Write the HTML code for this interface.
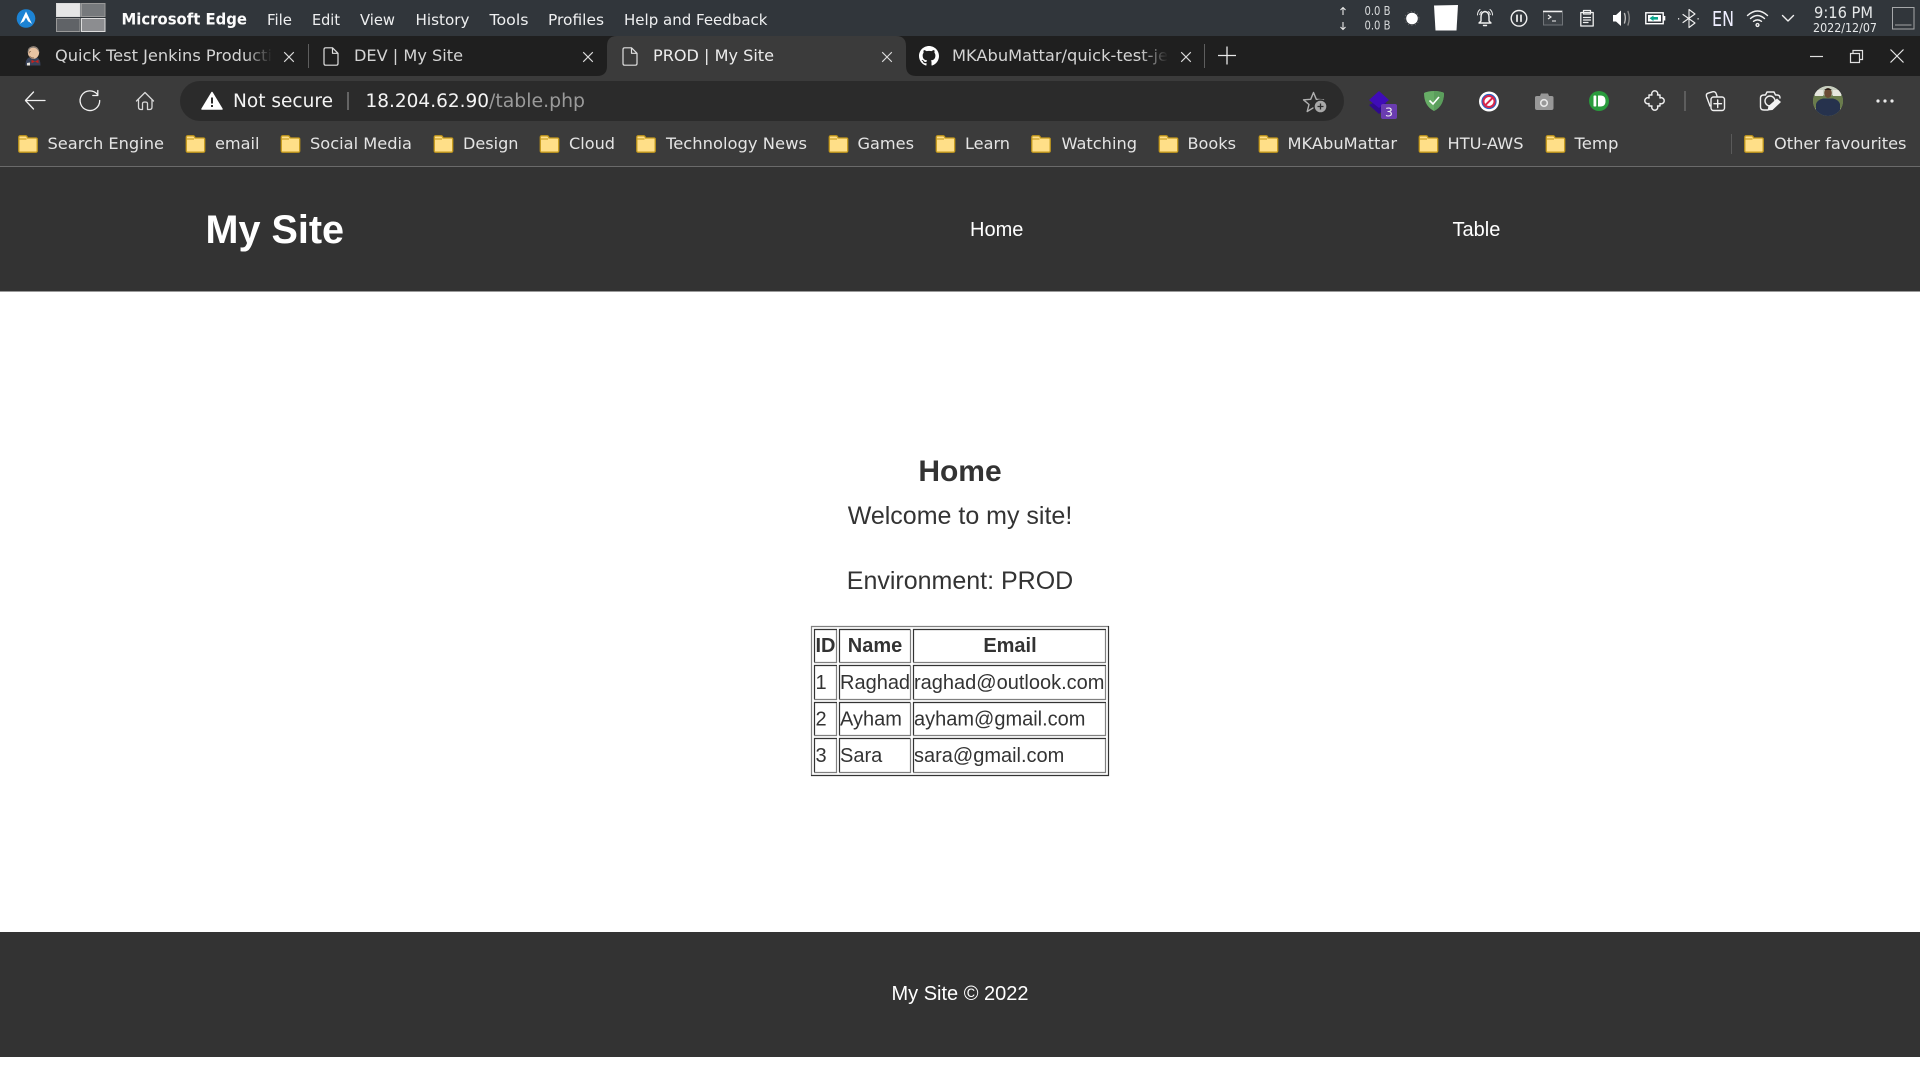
<!DOCTYPE html>
<html><head><meta charset="utf-8"><title>PROD | My Site</title>
<style>
html,body{margin:0;padding:0;background:#fff;width:1920px;height:1080px;overflow:hidden}
svg{display:block}
.c{font-family:"DejaVu Sans","Liberation Sans",sans-serif}
.p{font-family:"Liberation Sans",Arial,sans-serif}
.m{font-size:15.5px;fill:#eff0f1}
.t{font-size:16px}
.b{font-size:16px;fill:#e4e4e4}
.s{fill:none;stroke:#f0f0f0;stroke-width:1.4;stroke-linecap:round;stroke-linejoin:round}
</style></head><body>
<svg xmlns="http://www.w3.org/2000/svg" width="1920" height="1080" viewBox="0 0 1920 1080">
<defs>
<symbol id="f" viewBox="0 0 20 18" width="20" height="18" overflow="visible"><path d="M.8 2.2Q.8.8 2.2.8H7.5Q9 .8 9.5 3H18Q19.2 3 19.2 4.2V15.8Q19.2 17.2 18 17.2H2Q.8 17.2.8 15.8Z" fill="#ffdf88" stroke="#c59a1c" stroke-width="1.3"/><path d="M.8 4H8.5" stroke="#c59a1c" stroke-width="1.1"/></symbol>
<symbol id="d" viewBox="0 0 16 19" width="16" height="19" overflow="visible"><path d="M1 2.5Q1 .8 2.7 .8H9.5L15 6.3V16.5Q15 18.2 13.3 18.2H2.7Q1 18.2 1 16.5ZM9.5 .8V6.3H15" fill="none" stroke="#e0e0e0" stroke-width="1.2" stroke-linejoin="round"/></symbol>
<symbol id="x" viewBox="0 0 12 12" width="12" height="12" overflow="visible"><path d="M1.2 1.2L10.8 10.8M10.8 1.2L1.2 10.8" stroke="#dcdcdc" stroke-width="1.1" fill="none"/></symbol>
<linearGradient id="g1" gradientUnits="userSpaceOnUse" x1="245" x2="272" y1="0" y2="0"><stop offset="0" stop-color="#d4d4d4"/><stop offset="1" stop-color="#d4d4d4" stop-opacity="0"/></linearGradient>
<linearGradient id="g2" gradientUnits="userSpaceOnUse" x1="1140" x2="1168" y1="0" y2="0"><stop offset="0" stop-color="#d4d4d4"/><stop offset="1" stop-color="#d4d4d4" stop-opacity="0"/></linearGradient>
<clipPath id="av"><circle cx="1828" cy="101" r="15"/></clipPath>
</defs>

<!-- top system bar -->
<rect width="1920" height="36" fill="#31363b"/>
<circle cx="26" cy="18.5" r="9.3" fill="#1c83d4"/>
<path d="M26 11.5L32 24Q29 21.5 28.2 21.5L26 17.5L23.8 21.5Q23 21.5 20 24Z" fill="#fff"/>
<g stroke="#dcdcdc" stroke-width="1">
<rect x="56.5" y="3.5" width="23.5" height="13" fill="#e6e6e6"/>
<rect x="81.5" y="3.5" width="23.5" height="13" fill="#76797c" stroke="#999"/>
<rect x="56.5" y="18.5" width="23.5" height="13" fill="#606367" stroke="#999"/>
<rect x="81.5" y="18.5" width="23.5" height="13" fill="#8c8d90"/>
</g>
<g class="c">
<text x="121.5" y="24.5" font-size="16" font-weight="700" fill="#fcfcfc" textLength="125.5" lengthAdjust="spacingAndGlyphs">Microsoft Edge</text>
<text class="m" x="267" y="25" textLength="25" lengthAdjust="spacingAndGlyphs">File</text>
<text class="m" x="312" y="25" textLength="28" lengthAdjust="spacingAndGlyphs">Edit</text>
<text class="m" x="360" y="25" textLength="35" lengthAdjust="spacingAndGlyphs">View</text>
<text class="m" x="415.5" y="25" textLength="54" lengthAdjust="spacingAndGlyphs">History</text>
<text class="m" x="489.5" y="25" textLength="39" lengthAdjust="spacingAndGlyphs">Tools</text>
<text class="m" x="548" y="25" textLength="56" lengthAdjust="spacingAndGlyphs">Profiles</text>
<text class="m" x="624" y="25" textLength="143.5" lengthAdjust="spacingAndGlyphs">Help and Feedback</text>
</g>

<!-- tray -->
<path d="M1343 15V8M1340.5 10L1343 7.5L1345.5 10M1343 22V29M1340.5 27L1343 29.5L1345.5 27" fill="none" stroke="#e8e8e8" stroke-width="1.1"/>
<g class="c" font-size="12" fill="#d8dadb"><text x="1364.5" y="14.8" textLength="26" lengthAdjust="spacingAndGlyphs">0.0 B</text><text x="1364.5" y="29.5" textLength="26" lengthAdjust="spacingAndGlyphs">0.0 B</text></g>
<circle cx="1412" cy="18.5" r="5.8" fill="#fff"/><circle cx="1412" cy="18.5" r="7" fill="none" stroke="#aaa" stroke-width=".8" stroke-dasharray="1 2.5" opacity=".6"/>
<path d="M1434 5.5L1458 5L1456.5 30.5H1435.5Z" fill="#fff"/>
<g class="s" stroke-width="1.2">
<path d="M1485 11.5Q1481 12 1481 17V21L1479 23H1491L1489 21V17Q1489 12 1485 11.5Z" fill="none"/>
<path d="M1483.5 25.5H1486.5"/>
<path d="M1477.5 15Q1477.5 11.5 1480 9.5M1492.5 15Q1492.5 11.5 1490 9.5" stroke-width="1"/>
<path d="M1479.7 14.5Q1480 12.7 1481.5 11.5M1490.3 14.5Q1490 12.7 1488.5 11.5" stroke-width=".9"/>
<circle cx="1519" cy="18.3" r="7.8"/><path d="M1517 15.2V21.3M1521 15.2V21.3" stroke-width="1.7"/>
<path d="M1580.8 12.5H1593.2V26H1580.8ZM1583.5 14V10.5H1590.5V14ZM1583.5 17.5H1590.5M1583.5 20H1590.5M1583.5 22.5H1588" stroke-width="1.3"/>
<path d="M1628 11.5Q1630.5 18 1628 25" stroke="#888"/>
<path d="M1624.5 13.5Q1626.2 18 1624.5 23" stroke="#bbb"/>
<path d="M1683 14.5L1695 23L1689 27.5V9.5L1695 14L1683 22.5" stroke-width="1.1"/>
<path d="M1678 18.8H1680.5M1697.5 18.8H1700" stroke-dasharray="1.2 1.8" stroke-linecap="butt"/>
</g>
<rect x="1543.5" y="11" width="19" height="14" fill="#3c4146" stroke="#707478"/>
<path d="M1543 11.5H1562" stroke="#f0f0f0" stroke-width="1.6"/>
<path d="M1548 15L1551 17L1548 19M1552 21H1556" fill="none" stroke="#f0f0f0" stroke-width="1.1"/>
<path d="M1613 15H1616L1621 10.5V26L1616 21.5H1613Z" fill="#fff"/>
<rect x="1645.8" y="12.8" width="17.4" height="10.9" fill="#31363b" stroke="#fff" stroke-width="1.4"/><rect x="1663.5" y="16" width="1.8" height="4.5" fill="#fff"/>
<rect x="1648" y="15" width="13" height="6.5" fill="#fff"/>
<path d="M1649.5 18.3L1653.5 15.5V17H1658V19.6H1653.5V21Z" fill="#0aa58c"/>
<text class="c" x="1712" y="26" font-size="20" fill="#eef" textLength="22" lengthAdjust="spacingAndGlyphs">EN</text>
<g class="s" stroke-width="1.2"><path d="M1747.5 15.5Q1757.5 6.5 1767.5 15.5M1750.5 18.5Q1757.5 12.5 1764.5 18.5M1753.5 21.3Q1757.5 18.5 1761.5 21.3"/><circle cx="1757.5" cy="25" r="1.4"/><path d="M1782.5 15.5L1788 21L1793.5 15.5"/></g>
<g class="c" fill="#e6e8e9"><text x="1814" y="18" font-size="16" textLength="59" lengthAdjust="spacingAndGlyphs">9:16 PM</text><text x="1813" y="32" font-size="12" textLength="64" lengthAdjust="spacingAndGlyphs">2022/12/07</text></g>
<rect x="1892.5" y="7.5" width="21.5" height="21.5" fill="none" stroke="#a6a8aa"/><path d="M1895 25H1911.5" stroke="#8c8e90" stroke-width="1.2"/>

<!-- tab strip -->
<rect y="36" width="1920" height="40" fill="#1f1f1f"/>
<path d="M607 81V46Q607 36 617 36H896Q906 36 906 46V66Q906 76 916 76H906V81Z" fill="#3b3b3b"/>
<path d="M597 76Q607 76 607 66V76ZM906 66Q906 76 916 76H906Z" fill="#3b3b3b"/>
<!-- jenkins -->
<path d="M25.5 65.5Q25.5 59 29 57.5H37Q40.5 59 40.5 65.5Z" fill="#39435a"/>
<ellipse cx="33.5" cy="52.5" rx="5.6" ry="6.3" fill="#e8c3a2"/>
<path d="M27.8 53Q27 46.8 33 46.4Q39.2 46.5 39.3 53L38 50.5Q36.5 47.8 33 47.8Q29.5 48 28.8 51Z" fill="#8a8078"/>
<path d="M29 53.5Q29 51.5 31 51.5M29.5 56Q31.5 58.5 34 57.8" fill="none" stroke="#8a6a50" stroke-width=".8"/>
<path d="M35 61.5L31.5 59.8V63.2ZM35 61.5L38.5 59.8V63.2Z" fill="#c5231f"/>
<path d="M27 63V65.5H30V62.5Z" fill="#e8e4dc"/>
<g class="c t">
<text x="55" y="61" fill="url(#g1)" textLength="217" lengthAdjust="spacingAndGlyphs">Quick Test Jenkins Producti</text>
<text x="354" y="61" fill="#d4d4d4" textLength="109" lengthAdjust="spacingAndGlyphs">DEV | My Site</text>
<text x="653" y="61" fill="#ececec" textLength="121" lengthAdjust="spacingAndGlyphs">PROD | My Site</text>
<text x="952" y="61" fill="url(#g2)" textLength="216" lengthAdjust="spacingAndGlyphs">MKAbuMattar/quick-test-je</text>
</g>
<use href="#x" x="283" y="51"/><use href="#x" x="582" y="51"/><use href="#x" x="881" y="51"/><use href="#x" x="1180" y="51"/>
<path d="M308.5 44V68M1204.5 44V68" stroke="#5e5e5e"/>
<use href="#d" x="323" y="47"/><use href="#d" x="622" y="47"/>
<svg x="919" y="46" width="20" height="20" viewBox="0 0 16 16"><path fill="#fff" d="M8 0C3.58 0 0 3.58 0 8c0 3.54 2.29 6.53 5.47 7.59.4.07.55-.17.55-.38 0-.19-.01-.82-.01-1.49-2.01.37-2.53-.49-2.69-.94-.09-.23-.48-.94-.82-1.13-.28-.15-.68-.52-.01-.53.63-.01 1.08.58 1.23.82.72 1.21 1.87.87 2.33.66.07-.52.28-.87.51-1.07-1.78-.2-3.64-.89-3.64-3.95 0-.87.31-1.59.82-2.15-.08-.2-.36-1.02.08-2.12 0 0 .67-.21 2.2.82.64-.18 1.32-.27 2-.27.68 0 1.36.09 2 .27 1.53-1.04 2.2-.82 2.2-.82.44 1.1.16 1.92.08 2.12.51.56.82 1.27.82 2.15 0 3.07-1.87 3.75-3.65 3.95.29.25.54.73.54 1.48 0 1.07-.01 1.93-.01 2.2 0 .21.15.46.55.38A8.013 8.013 0 0016 8c0-4.42-3.58-8-8-8z"/></svg>
<path d="M1218 55.5H1236M1227 46.5V64.5" stroke="#e8e8e8" stroke-width="1.3"/>
<path d="M1810 56.5H1823" stroke="#e0e0e0" stroke-width="1.2"/>
<path d="M1850.5 53.5H1859.5V62.5H1850.5ZM1853 53.5V50.5H1862.5V59.5H1859.5" fill="none" stroke="#e0e0e0" stroke-width="1.2"/>
<path d="M1890.5 49.5L1903.5 62.5M1903.5 49.5L1890.5 62.5" stroke="#e8e8e8" stroke-width="1.2"/>

<!-- toolbar -->
<rect y="76" width="607" height="90" fill="#3b3b3b"/><rect x="906" y="76" width="1014" height="90" fill="#3b3b3b"/><rect x="607" y="81" width="299" height="85" fill="#3b3b3b"/>
<rect x="0" y="166" width="1920" height="1" fill="#6a6a6a"/>
<g class="s">
<path d="M45 100.5H26M33.5 92L25.5 100.5L33.5 109" stroke-width="1.3"/>
<path d="M97.5 94.5A9.8 9.8 0 1 0 99.7 100.5M97.8 90.5V95.5H92.8" stroke-width="1.3"/>
<path d="M136.5 101L145 92.5L153.5 101M138.5 99.5V107Q138.5 109.5 141 109.5H142.5V103.5Q142.5 102 145 102Q147.5 102 147.5 103.5V109.5H149.5Q152 109.5 152 107V99.5" stroke="#d8d8d8" stroke-width="1.3"/>
</g>
<rect x="180" y="81" width="1164" height="40" rx="20" fill="#2b2b2b"/>
<path d="M212 92.5L222 109H202Z" fill="#fff" stroke="#fff" stroke-width="1.5" stroke-linejoin="round"/>
<path d="M212 97.5V103.5M212 105V107" stroke="#2b2b2b" stroke-width="2"/>
<g class="c" font-size="18.5">
<text x="233" y="107" fill="#f4f4f4" textLength="100" lengthAdjust="spacingAndGlyphs">Not secure</text>
<text x="365.5" y="107" fill="#f4f4f4" textLength="123.5" lengthAdjust="spacingAndGlyphs">18.204.62.90</text>
<text x="489" y="107" fill="#9a9a9a" textLength="96" lengthAdjust="spacingAndGlyphs">/table.php</text>
</g>
<path d="M348 92V110" stroke="#8a8a8a" stroke-width="1.2"/>
<!-- star add -->
<path d="M1313.5 92.5L1316.3 99.3L1323.5 99.8L1318 104.5L1319.8 111.5L1313.5 107.7L1307.2 111.5L1309 104.5L1303.5 99.8L1310.7 99.3Z" fill="none" stroke="#b0b0b0" stroke-width="1.4" stroke-linejoin="round"/>
<circle cx="1320.5" cy="106.5" r="7.2" fill="#2b2b2b"/>
<circle cx="1320.5" cy="106.5" r="5.8" fill="#a8a8a8"/><path d="M1317.5 106.5H1323.5M1320.5 103.5V109.5" stroke="#2b2b2b" stroke-width="1.3"/>
<!-- stacked purple -->
<path d="M1369 101L1379 96L1389 101L1379 110Z" fill="#2f0a8e" transform="translate(0,4)"/>
<path d="M1369 100L1379 91L1389 100L1379 108Z" fill="#3f0cb8"/>
<rect x="1381" y="104" width="16" height="15" rx="2" fill="#6a3cb0"/>
<text class="c" x="1385" y="116.5" font-size="12.5" fill="#eee">3</text>
<!-- shield -->
<path d="M1434 91Q1440 91 1444 93Q1444 106 1434 111Q1424 106 1424 93Q1428 91 1434 91Z" fill="#67ad66"/>
<path d="M1434 91Q1440 91 1444 93Q1444 106 1434 111Z" fill="#5b9e5c"/>
<path d="M1429.5 100.5L1433 104L1439 97" fill="none" stroke="#fff" stroke-width="1.6"/>
<!-- red circle -->
<circle cx="1489" cy="101.5" r="10" fill="#fff"/><circle cx="1489" cy="101.5" r="7.6" fill="#2b63c4"/><circle cx="1489" cy="101.5" r="5.5" fill="#fff" stroke="#d8264a" stroke-width="2"/><path d="M1485.3 105.2L1492.7 97.8" stroke="#d8264a" stroke-width="2"/>
<!-- camera -->
<path d="M1535 97.5Q1535 96 1537 96H1540L1541 93.5H1548L1549 96H1551.5Q1553.5 96 1553.5 97.5V108Q1553.5 110 1551.5 110H1537Q1535 110 1535 108Z" fill="#989898"/>
<circle cx="1544" cy="103" r="3.3" fill="#989898" stroke="#e6e6e6" stroke-width="1.6"/>
<!-- pushbullet -->
<circle cx="1599" cy="101" r="10" fill="#2a9b3d"/>
<rect x="1593.5" y="95.5" width="2.8" height="11" rx=".8" fill="#fff"/>
<path d="M1598 95.5H1600.5Q1605.5 95.5 1605.5 101Q1605.5 106.5 1600.5 106.5H1598Z" fill="#fff"/>
<g class="s" stroke="#e8e8e8">
<!-- puzzle -->
<path d="M1649 95H1652A3 3 0 1 1 1657.5 95H1660V98A3 3 0 1 1 1660 103.5V106H1657.5A3 3 0 1 1 1652 106H1649V103.5A3 3 0 1 1 1649 98Z"/>
<!-- collections -->
<path d="M1710 106L1706.5 96.5Q1705.8 94 1708 93.2L1712.5 91.8Q1715 91.2 1716 93.2L1717 96"/>
<rect x="1711" y="97" width="13.5" height="13.5" rx="2.5"/><path d="M1717.7 100V107.5M1714 103.7H1721.5"/>
<!-- web capture -->
<path d="M1768 110H1764Q1760.5 110 1760.5 107V98Q1760.5 95 1764 95H1765.5L1767 92H1774L1775.5 95H1777Q1780 95 1780 98"/>
<circle cx="1770" cy="101" r="5"/>
</g>
<path d="M1767.5 110.5L1768.5 106L1777 98.5L1781 102L1772.5 110Z" fill="#f4f4f4"/>
<path d="M1685 91V111" stroke="#666" stroke-width="1.6"/>
<!-- avatar -->
<g clip-path="url(#av)">
<rect x="1813" y="86" width="30" height="30" fill="#8b9a7a"/>
<rect x="1813" y="86" width="30" height="9" fill="#c8cfc0"/>
<rect x="1815" y="90" width="8" height="6" fill="#e6e6de"/><rect x="1833" y="90" width="8" height="6" fill="#e6e6de"/>
<rect x="1813" y="96" width="30" height="12" fill="#6a7c4c"/>
<path d="M1816 116V104Q1817 100 1823 98.5H1833Q1839 100 1840 104V116Z" fill="#26324d"/>
<ellipse cx="1828" cy="93" rx="3.8" ry="5" fill="#6a4a34"/>
<path d="M1824 90Q1828 86.5 1832 90Z" fill="#2a1f18"/>
</g>
<g fill="#eaeaea"><circle cx="1878" cy="101" r="1.6"/><circle cx="1885" cy="101" r="1.6"/><circle cx="1892" cy="101" r="1.6"/></g>

<!-- bookmarks -->
<use href="#f" x="18" y="135"/><use href="#f" x="185.5" y="135"/><use href="#f" x="280.5" y="135"/><use href="#f" x="433.5" y="135"/><use href="#f" x="539.5" y="135"/><use href="#f" x="636" y="135"/><use href="#f" x="828.5" y="135"/><use href="#f" x="935.5" y="135"/><use href="#f" x="1031" y="135"/><use href="#f" x="1158.5" y="135"/><use href="#f" x="1258.5" y="135"/><use href="#f" x="1418.5" y="135"/><use href="#f" x="1545.5" y="135"/><use href="#f" x="1744" y="135"/>
<g class="c b">
<text x="47.5" y="149" textLength="116.5" lengthAdjust="spacingAndGlyphs">Search Engine</text>
<text x="215" y="149" textLength="44.5" lengthAdjust="spacingAndGlyphs">email</text>
<text x="310" y="149" textLength="102" lengthAdjust="spacingAndGlyphs">Social Media</text>
<text x="463" y="149" textLength="55.5" lengthAdjust="spacingAndGlyphs">Design</text>
<text x="569" y="149" textLength="46" lengthAdjust="spacingAndGlyphs">Cloud</text>
<text x="666" y="149" textLength="141" lengthAdjust="spacingAndGlyphs">Technology News</text>
<text x="857.5" y="149" textLength="56.5" lengthAdjust="spacingAndGlyphs">Games</text>
<text x="965" y="149" textLength="45" lengthAdjust="spacingAndGlyphs">Learn</text>
<text x="1061.5" y="149" textLength="75.5" lengthAdjust="spacingAndGlyphs">Watching</text>
<text x="1187.5" y="149" textLength="48.5" lengthAdjust="spacingAndGlyphs">Books</text>
<text x="1287.5" y="149" textLength="109.5" lengthAdjust="spacingAndGlyphs">MKAbuMattar</text>
<text x="1447.5" y="149" textLength="76" lengthAdjust="spacingAndGlyphs">HTU-AWS</text>
<text x="1574.5" y="149" textLength="44" lengthAdjust="spacingAndGlyphs">Temp</text>
<text x="1774" y="149" textLength="132.5" lengthAdjust="spacingAndGlyphs">Other favourites</text>
</g>
<path d="M1731.5 134V154" stroke="#5a5a5a"/>

<!-- page -->
<rect y="167" width="1920" height="124.5" fill="#333"/>
<g class="p">
<text x="205.5" y="243" font-size="40" font-weight="700" fill="#fff" textLength="138.5" lengthAdjust="spacingAndGlyphs">My Site</text>
<text x="970" y="236" font-size="20" fill="#fff">Home</text>
<text x="1452.5" y="236" font-size="20" fill="#fff">Table</text>
<g fill="#333" text-anchor="middle">
<text x="960" y="481" font-size="30" font-weight="700">Home</text>
<text x="960" y="524" font-size="25">Welcome to my site!</text>
<text x="960" y="589" font-size="25">Environment: PROD</text>
</g>
<!-- table -->
<path d="M811.5 776V626.5H1109" fill="none" stroke="#808080" stroke-width="1.2"/>
<path d="M1108.5 626V775.5H811" fill="none" stroke="#333" stroke-width="1.2"/>
<g fill="none" stroke-width="1.2">
<g stroke="#333"><path d="M814.5 662V629.5H837"/><path d="M839.5 662V629.5H910.5"/><path d="M913.5 662V629.5H1106"/>
<path d="M814.5 699V665.5H837"/><path d="M839.5 699V665.5H910.5"/><path d="M913.5 699V665.5H1106"/>
<path d="M814.5 735.5V702.5H837"/><path d="M839.5 735.5V702.5H910.5"/><path d="M913.5 735.5V702.5H1106"/>
<path d="M814.5 772V738.5H837"/><path d="M839.5 772V738.5H910.5"/><path d="M913.5 772V738.5H1106"/></g>
<g stroke="#808080"><path d="M836.5 630V662.5H814"/><path d="M910.5 630V662.5H839"/><path d="M1105.5 630V662.5H913"/>
<path d="M836.5 666V699.5H814"/><path d="M910.5 666V699.5H839"/><path d="M1105.5 666V699.5H913"/>
<path d="M836.5 703V735.5H814"/><path d="M910.5 703V735.5H839"/><path d="M1105.5 703V735.5H913"/>
<path d="M836.5 739V772.5H814"/><path d="M910.5 739V772.5H839"/><path d="M1105.5 739V772.5H913"/></g>
</g>
<g fill="#333" font-size="20">
<g font-weight="700" text-anchor="middle"><text x="825.5" y="652">ID</text><text x="875" y="652">Name</text><text x="1010" y="652">Email</text></g>
<text x="815.5" y="689">1</text><text x="840" y="689">Raghad</text><text x="914" y="689">raghad@outlook.com</text>
<text x="815.5" y="725.5">2</text><text x="840" y="725.5">Ayham</text><text x="914" y="725.5">ayham@gmail.com</text>
<text x="815.5" y="762">3</text><text x="840" y="762">Sara</text><text x="914" y="762">sara@gmail.com</text>
</g>
<rect y="932" width="1920" height="125" fill="#333"/>
<text x="960" y="1000" font-size="20" fill="#fff" text-anchor="middle">My Site © 2022</text>
</g>
</svg>
</body></html>
